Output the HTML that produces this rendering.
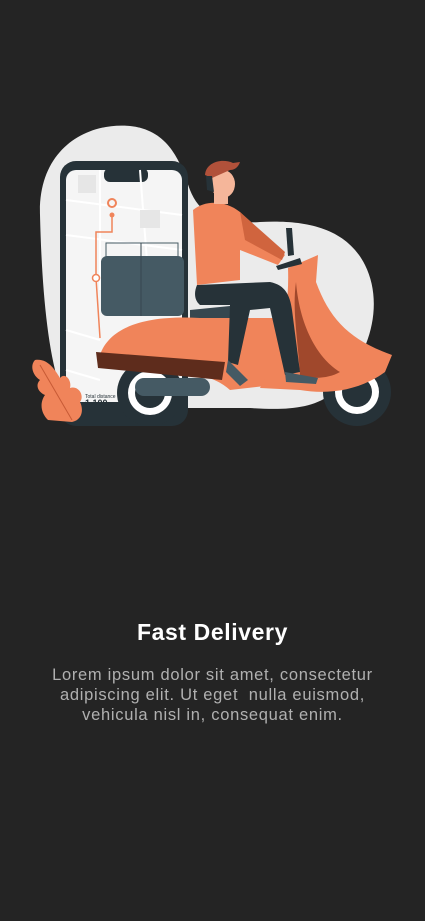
<!DOCTYPE html>
<html><head><meta charset="utf-8"><style>
html,body{margin:0;padding:0;background:#242424;width:425px;height:921px;overflow:hidden;font-family:"Liberation Sans",sans-serif}
svg{position:absolute;left:0;top:0}
h1{position:absolute;top:619px;left:0;width:425px;text-align:center;margin:0;color:#fff;font-size:23px;font-weight:bold;letter-spacing:0.6px}
p{position:absolute;top:665px;left:0;width:425px;text-align:center;margin:0;color:#b0b0b0;font-size:16.5px;line-height:20px;letter-spacing:0.7px;white-space:pre}
</style></head><body>
<svg width="425" height="921" viewBox="0 0 425 921">
<path d="M40,215 C38,150 85,122 130,126 C168,130 180,160 190,190 C200,215 220,225 260,222 C300,220 345,225 365,265 C385,305 370,360 330,395 C310,410 280,410 250,408 L70,408 C50,380 42,300 40,215Z" fill="#ebebeb"/>
<rect x="60" y="161" width="128" height="265" rx="16" fill="#263238"/>
<rect x="66" y="170" width="116" height="232" rx="10" fill="#f5f5f5"/>
<rect x="104" y="168" width="44" height="14" rx="6" fill="#263238"/>
<g stroke="#fff" stroke-width="2" fill="none"><path d="M66,200 L182,215 M66,235 L182,250 M100,170 L100,290 M140,170 L150,300 M66,330 L100,340 M66,370 L100,380"/></g>
<rect x="78" y="175" width="18" height="18" fill="#e6e6e6"/><rect x="140" y="210" width="20" height="18" fill="#e6e6e6"/>
<path d="M112,215 L112,232 L96,232 L96,278 L100,338" stroke="#f0845a" stroke-width="1.5" fill="none"/>
<circle cx="112" cy="203" r="4" fill="none" stroke="#f0845a" stroke-width="2"/><circle cx="112" cy="215" r="2.5" fill="#f0845a"/>
<circle cx="96" cy="278" r="3.5" fill="#fff" stroke="#f0845a" stroke-width="1.5"/>
<text x="85" y="398" font-size="5" fill="#263238">Total distance</text>
<text x="85" y="406" font-size="9" font-weight="bold" fill="#263238">1,100</text>
<rect x="106" y="243" width="72" height="14" fill="none" stroke="#455a64" stroke-width="1"/>
<rect x="101" y="256" width="83" height="60" rx="6" fill="#455a64"/>
<path d="M141,243 L141,316" stroke="#37474f" stroke-width="1"/>
<circle cx="150" cy="393" r="33" fill="#263238"/><circle cx="150" cy="393" r="22" fill="#fff"/><circle cx="150" cy="393" r="15" fill="#263238"/>
<circle cx="357" cy="392" r="34" fill="#263238"/><circle cx="357" cy="392" r="22" fill="#fff"/><circle cx="357" cy="392" r="15" fill="#263238"/>
<rect x="135" y="378" width="75" height="18" rx="9" fill="#455a64"/>
<path d="M190,310 L240,305 L240,318 L190,320Z" fill="#37474f"/>
<path d="M100,355 C110,325 150,315 200,318 L290,318 L300,382 L230,390 C210,372 180,372 160,368 Z" fill="#f0845a"/>
<path d="M96,352 L225,362 L222,380 L98,368Z" fill="#5e2c1c"/>
<path d="M288,268 L318,255 L316,282 C330,320 350,340 392,355 L385,372 C360,390 330,395 300,390 L260,388 C275,360 290,320 288,268Z" fill="#f0845a"/>
<path d="M296,282 C300,330 320,360 340,372 C330,378 312,380 300,375 C298,340 292,310 296,282Z" fill="#a0482c"/>
<path d="M286,228 L292,228 L294,255 L288,256Z" fill="#263238"/>
<path d="M276,266 L300,258 L302,264 L278,270Z" fill="#263238"/>
<path d="M197,285 L270,282 C285,285 290,295 292,310 L300,372 L285,375 L270,308 L250,310 L238,365 L228,362 L230,305 L200,305 C194,300 194,292 197,285Z" fill="#263238"/>
<path d="M228,360 L248,380 L240,386 L226,372Z" fill="#455a64"/><path d="M285,372 L318,378 L316,384 L286,382Z" fill="#455a64"/>
<path d="M193,210 C205,200 225,200 240,212 L285,255 L278,265 L240,250 L240,280 L197,285 Z" fill="#f0845a"/>
<path d="M240,212 L285,252 L282,260 L245,240Z" fill="#d0643e"/>
<rect x="214" y="190" width="14" height="14" fill="#f5b69a"/>
<ellipse cx="223" cy="184" rx="12" ry="14" fill="#f5b69a"/>
<path d="M205,175 C206,162 222,158 233,163 L240,162 C238,168 234,170 230,170 L212,178 Z" fill="#b1513a"/>
<path d="M206,176 L212,176 L214,192 L207,190Z" fill="#263238"/>
<path d="M35,360 C48,358 55,370 60,378 C65,372 72,380 70,388 C78,385 85,395 80,402 C84,410 82,420 72,422 L48,420 C40,412 40,402 45,395 C38,392 35,385 40,380 C32,375 30,365 35,360Z" fill="#f0845a"/>
<path d="M40,365 L72,420" stroke="#c75a35" stroke-width="1" fill="none"/>
</svg>
<h1>Fast Delivery</h1>
<p>Lorem ipsum dolor sit amet, consectetur
adipiscing elit. Ut eget  nulla euismod,
vehicula nisl in, consequat enim.</p>
</body></html>
